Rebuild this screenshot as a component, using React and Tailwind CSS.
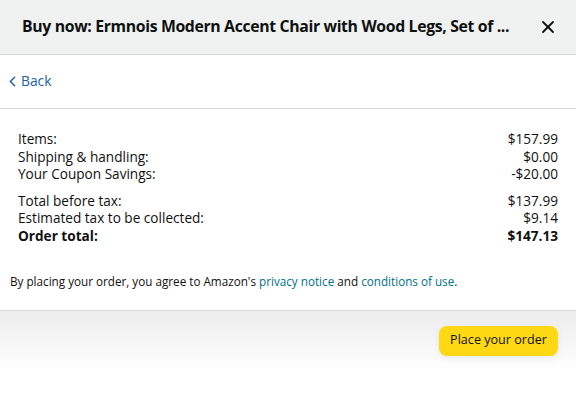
import { X, ChevronLeft } from "lucide-react";

const rows1 = [
  ["Items:", "$157.99"],
  ["Shipping & handling:", "$0.00"],
  ["Your Coupon Savings:", "-$20.00"],
];

const rows2 = [
  ["Total before tax:", "$137.99"],
  ["Estimated tax to be collected:", "$9.14"],
];

const App = () => {
  return (
    <div
      className="flex h-[400px] w-[576px] flex-col bg-white text-[#0f1111]"
      style={{ fontFamily: '"Open Sans", Arial, sans-serif' }}
    >
      <div className="flex h-[55px] items-center justify-between border-b border-[#d5d9d9] bg-[#f0f2f2] pl-[22px] pr-[18px]">
        <h1 className="whitespace-nowrap text-[15.8px] font-bold tracking-[-0.35px]">
          Buy now: Ermnois Modern Accent Chair with Wood Legs, Set of ...
        </h1>
        <X className="ml-2 h-[20px] w-[20px] shrink-0" strokeWidth={2.2} />
      </div>

      <div className="flex h-[54px] items-center border-b border-[#d5d9d9] px-[4px]">
        <button className="flex items-center text-[13.8px] text-[#2162a1]">
          <ChevronLeft className="h-[17px] w-[17px]" strokeWidth={2.2} />
          <span>Back</span>
        </button>
      </div>

      <div className="px-[18px] pt-[21px] text-[13.6px] leading-[17.5px]">
        {rows1.map(([label, value]) => (
          <div key={label} className="flex justify-between">
            <span>{label}</span>
            <span>{value}</span>
          </div>
        ))}
        <div className="mt-[9px]">
          {rows2.map(([label, value]) => (
            <div key={label} className="flex justify-between">
              <span>{label}</span>
              <span>{value}</span>
            </div>
          ))}
          <div className="flex justify-between font-bold">
            <span>Order total:</span>
            <span>$147.13</span>
          </div>
        </div>
      </div>

      <p className="mt-[29px] px-[10px] text-[11.7px]">
        By placing your order, you agree to Amazon's{" "}
        <a className="text-[#007185]">privacy notice</a> and{" "}
        <a className="text-[#007185]">conditions of use</a>.
      </p>

      <div className="mt-[19px] flex flex-1 justify-end border-t border-[#d5d9d9] bg-gradient-to-b from-[#ececec] to-white to-[60px] pr-[18px] pt-[15px]">
        <button className="h-[30px] w-[119px] rounded-[8px] bg-[#ffd814] text-[12.6px] shadow-[0_2px_5px_rgba(213,217,217,0.5)]">
          Place your order
        </button>
      </div>
    </div>
  );
};

export default App;
